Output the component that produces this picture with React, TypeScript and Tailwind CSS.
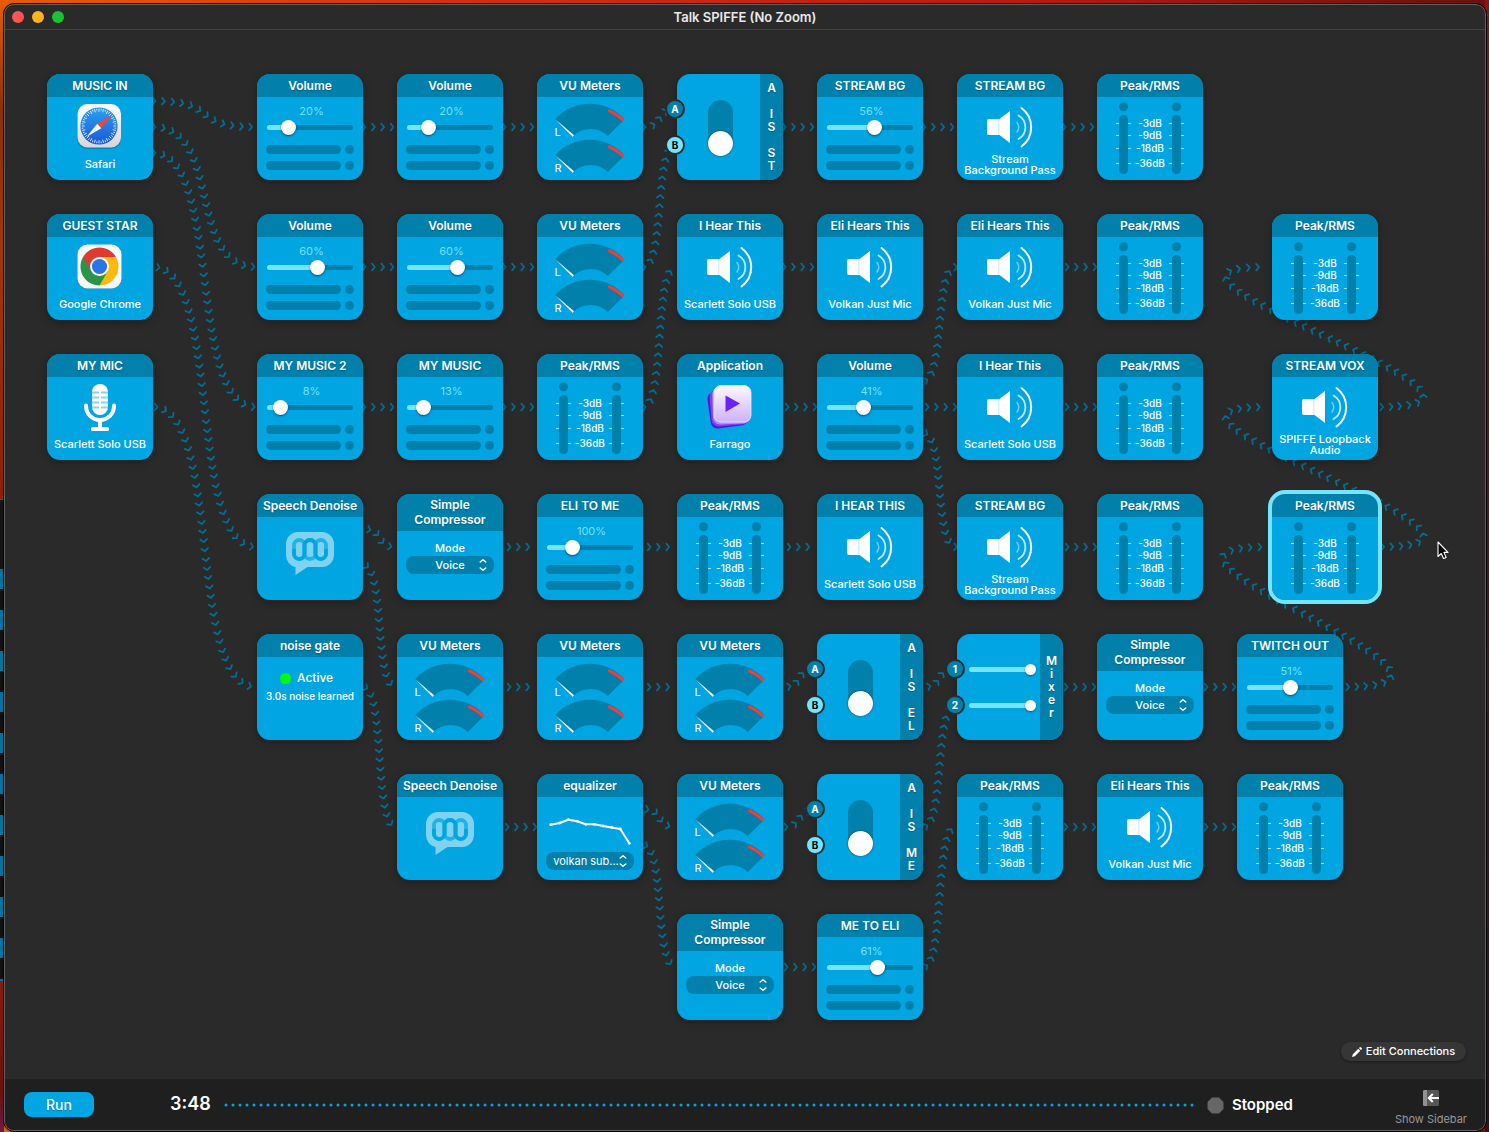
import React from "react";

/* ---------- geometry of the board ---------- */

const NODE = 106;
const HALF = 53;
const CHEVRON_STEP = 9.3;

/* left and top edges of the grid slots, measured on the canvas */
const COLS = [42, 252, 392, 532, 672, 812, 952, 1092, 1232, 1267];
const ROWS = [44, 184, 324, 464, 604, 744, 884];

type NodeSpec = {
  col: number;
  row: number;
  kind: "source" | "volume" | "vu" | "switch" | "output" | "peak" | "denoise" | "compressor" | "gate" | "equalizer" | "mixer";
  title: string;
  caption?: string;
  icon?: "safari" | "chrome" | "mic" | "farrago";
  percent?: number;
  position?: number;
  selected?: boolean;
};

const NODES: NodeSpec[] = [
  { col: 0, row: 0, kind: "source", title: "MUSIC IN", caption: "Safari", icon: "safari" },
  { col: 1, row: 0, kind: "volume", title: "Volume", percent: 20 },
  { col: 2, row: 0, kind: "volume", title: "Volume", percent: 20 },
  { col: 3, row: 0, kind: "vu", title: "VU Meters" },
  { col: 4, row: 0, kind: "switch", title: "A IS ST" },
  { col: 5, row: 0, kind: "volume", title: "STREAM BG", percent: 56 },
  { col: 6, row: 0, kind: "output", title: "STREAM BG", caption: "Stream Background Pass" },
  { col: 7, row: 0, kind: "peak", title: "Peak/RMS" },

  { col: 0, row: 1, kind: "source", title: "GUEST STAR", caption: "Google Chrome", icon: "chrome" },
  { col: 1, row: 1, kind: "volume", title: "Volume", percent: 60 },
  { col: 2, row: 1, kind: "volume", title: "Volume", percent: 60 },
  { col: 3, row: 1, kind: "vu", title: "VU Meters" },
  { col: 4, row: 1, kind: "output", title: "I Hear This", caption: "Scarlett Solo USB" },
  { col: 5, row: 1, kind: "output", title: "Eli Hears This", caption: "Volkan Just Mic" },
  { col: 6, row: 1, kind: "output", title: "Eli Hears This", caption: "Volkan Just Mic" },
  { col: 7, row: 1, kind: "peak", title: "Peak/RMS" },
  { col: 9, row: 1, kind: "peak", title: "Peak/RMS" },

  { col: 0, row: 2, kind: "source", title: "MY MIC", caption: "Scarlett Solo USB", icon: "mic" },
  { col: 1, row: 2, kind: "volume", title: "MY MUSIC 2", percent: 8 },
  { col: 2, row: 2, kind: "volume", title: "MY MUSIC", percent: 13 },
  { col: 3, row: 2, kind: "peak", title: "Peak/RMS" },
  { col: 4, row: 2, kind: "source", title: "Application", caption: "Farrago", icon: "farrago" },
  { col: 5, row: 2, kind: "volume", title: "Volume", percent: 41 },
  { col: 6, row: 2, kind: "output", title: "I Hear This", caption: "Scarlett Solo USB" },
  { col: 7, row: 2, kind: "peak", title: "Peak/RMS" },
  { col: 9, row: 2, kind: "output", title: "STREAM VOX", caption: "SPIFFE Loopback Audio" },

  { col: 1, row: 3, kind: "denoise", title: "Speech Denoise" },
  { col: 2, row: 3, kind: "compressor", title: "Simple Compressor" },
  { col: 3, row: 3, kind: "volume", title: "ELI TO ME", percent: 100, position: 25 },
  { col: 4, row: 3, kind: "peak", title: "Peak/RMS" },
  { col: 5, row: 3, kind: "output", title: "I HEAR THIS", caption: "Scarlett Solo USB" },
  { col: 6, row: 3, kind: "output", title: "STREAM BG", caption: "Stream Background Pass" },
  { col: 7, row: 3, kind: "peak", title: "Peak/RMS" },
  { col: 9, row: 3, kind: "peak", title: "Peak/RMS", selected: true },

  { col: 1, row: 4, kind: "gate", title: "noise gate" },
  { col: 2, row: 4, kind: "vu", title: "VU Meters" },
  { col: 3, row: 4, kind: "vu", title: "VU Meters" },
  { col: 4, row: 4, kind: "vu", title: "VU Meters" },
  { col: 5, row: 4, kind: "switch", title: "A IS EL" },
  { col: 6, row: 4, kind: "mixer", title: "Mixer" },
  { col: 7, row: 4, kind: "compressor", title: "Simple Compressor" },
  { col: 8, row: 4, kind: "volume", title: "TWITCH OUT", percent: 51 },

  { col: 2, row: 5, kind: "denoise", title: "Speech Denoise" },
  { col: 3, row: 5, kind: "equalizer", title: "equalizer" },
  { col: 4, row: 5, kind: "vu", title: "VU Meters" },
  { col: 5, row: 5, kind: "switch", title: "A IS ME" },
  { col: 6, row: 5, kind: "peak", title: "Peak/RMS" },
  { col: 7, row: 5, kind: "output", title: "Eli Hears This", caption: "Volkan Just Mic" },
  { col: 8, row: 5, kind: "peak", title: "Peak/RMS" },

  { col: 4, row: 6, kind: "compressor", title: "Simple Compressor" },
  { col: 5, row: 6, kind: "volume", title: "ME TO ELI", percent: 61 },
];

/* from [col, row, port offset] to [col, row, port offset], with the phase of the first chevron */
type Port = [number, number, number];
const WIRES: [Port, Port, number][] = [
  [[0, 0, -26], [1, 0, 0], 1],
  [[0, 0, 0], [1, 1, 0], 1],
  [[0, 0, 26], [1, 2, 0], 1],
  [[1, 0, 0], [2, 0, 0], 1],
  [[2, 0, 0], [3, 0, 0], 1],
  [[3, 0, 0], [4, 0, -18], 1],
  [[4, 0, 0], [5, 0, 0], 1],
  [[5, 0, 0], [6, 0, 0], 1],
  [[6, 0, 0], [7, 0, 0], 1],
  [[0, 1, 0], [1, 3, 0], 5],
  [[1, 1, 0], [2, 1, 0], 1],
  [[2, 1, 0], [3, 1, 0], 1],
  [[3, 1, 0], [4, 0, 18], 1],
  [[4, 1, 0], [5, 1, 0], 1],
  [[6, 1, 0], [7, 1, 0], 4],
  [[0, 2, 0], [1, 4, 0], 3],
  [[1, 2, 0], [2, 2, 0], 1],
  [[2, 2, 0], [3, 2, 0], 1],
  [[3, 2, 0], [4, 1, 0], 1],
  [[4, 2, 0], [5, 2, 0], 4],
  [[5, 2, -26], [6, 1, 0], 3],
  [[5, 2, 0], [6, 2, 0], 4],
  [[5, 2, 26], [6, 3, 0], 3],
  [[6, 2, 0], [7, 2, 0], 4],
  [[9, 2, 0], [9, 1, 0], 3],
  [[1, 3, -18], [2, 3, 0], 6],
  [[1, 3, 18], [2, 4, 0], 4],
  [[2, 3, 0], [3, 3, 0], 6],
  [[3, 3, 0], [4, 3, 0], 6],
  [[4, 3, 0], [5, 3, 0], 6],
  [[6, 3, 0], [7, 3, 0], 4],
  [[9, 3, 0], [9, 2, 0], 4],
  [[1, 4, 0], [2, 5, 0], 3],
  [[2, 4, 0], [3, 4, 0], 6],
  [[3, 4, 0], [4, 4, 0], 6],
  [[4, 4, 0], [5, 4, -18], 6],
  [[5, 4, 0], [6, 4, -18], 6],
  [[6, 4, 0], [7, 4, 0], 3],
  [[7, 4, 0], [8, 4, 0], 3],
  [[8, 4, 0], [9, 3, 0], 4],
  [[2, 5, 0], [3, 5, 0], 4],
  [[3, 5, -18], [4, 5, 0], 4],
  [[3, 5, 18], [4, 6, 0], 3],
  [[4, 5, 0], [5, 5, -17], 3],
  [[5, 5, 0], [6, 4, 18], 3],
  [[6, 5, 0], [7, 5, 0], 3],
  [[7, 5, 0], [8, 5, 0], 3],
  [[4, 6, 0], [5, 6, 0], 3],
  [[5, 6, 0], [6, 5, 0], 3],
];

type Mark = { x: number; y: number; angle: number };

function chevronsAlong([a, b, phase]: [Port, Port, number]): Mark[] {
  const backward = COLS[b[0]] < COLS[a[0]] + NODE;
  const x0 = COLS[a[0]] + NODE;
  const y0 = ROWS[a[1]] + HALF + a[2];
  const x3 = COLS[b[0]] - (backward ? 7 : 1);
  const y3 = ROWS[b[1]] + HALF + b[2];
  const x1 = x0 + (backward ? 190 : (x3 - x0) * 0.68);
  const x2 = x3 - (backward ? 176 : (x3 - x0) * 0.68);
  const marks: Mark[] = [];
  let walked = 0;
  let next = phase;
  let px = x0;
  let py = y0;
  const steps = 600;
  for (let i = 1; i <= steps; i++) {
    const t = i / steps;
    const u = 1 - t;
    const x = u * u * u * x0 + 3 * u * u * t * x1 + 3 * u * t * t * x2 + t * t * t * x3;
    const y = u * u * u * y0 + 3 * u * u * t * y0 + 3 * u * t * t * y3 + t * t * t * y3;
    walked += Math.hypot(x - px, y - py);
    if (walked >= next) {
      marks.push({ x, y, angle: (Math.atan2(y - py, x - px) * 180) / Math.PI });
      next += CHEVRON_STEP;
    }
    px = x;
    py = y;
  }
  return marks;
}

function Wires() {
  return (
    <svg className="pointer-events-none absolute inset-0 h-full w-full" aria-hidden="true">
      {WIRES.map((wire, w) => (
        <g key={w} fill="none" stroke="#046d90" strokeWidth="1.8" strokeLinecap="round" strokeLinejoin="round">
          {chevronsAlong(wire).map((m, i) => (
            <path key={i} d="M-1.300-3.300 1.500 0-1.300 3.300" transform={`translate(${m.x} ${m.y}) rotate(${m.angle})`} />
          ))}
        </g>
      ))}
    </svg>
  );
}

/* ---------- artwork ---------- */

function Art({ children }: { children: React.ReactNode }) {
  return (
    <svg viewBox="0 23 106 57" className="h-[57px] w-full shrink-0" aria-hidden="true">
      {children}
    </svg>
  );
}

function SpeakerArt() {
  return (
    <Art>
      <path d="M32 45h9.500v16H32a2 2 0 0 1-2-2V47a2 2 0 0 1 2-2z" fill="#fff" />
      <path d="M41 45h2v16h-2z" fill="#d3f0fb" />
      <path d="M42.500 45 53 37v32L42.500 61z" fill="#fff" />
      <g fill="none" strokeLinecap="round" stroke="#fff">
        <path d="M64.500 34a24 24 0 0 1 0 38.500" strokeWidth="2" />
        <path d="M61.500 41.500a13.500 13.500 0 0 1 0 23.500" strokeWidth="1.800" opacity=".75" />
        <path d="M60 48.500a7.500 7.500 0 0 1 0 9.500" strokeWidth="1.600" opacity=".45" />
      </g>
    </Art>
  );
}

const SAFARI_TICKS = Array.from({ length: 48 }, (_, i) => i * 7.5);

function SafariArt() {
  return (
    <Art>
      <defs>
        <linearGradient id="safari-tile" x1="0" y1="0" x2="0" y2="1">
          <stop offset="0" stopColor="#fff" />
          <stop offset="1" stopColor="#d6d6d8" />
        </linearGradient>
        <linearGradient id="safari-dial" x1="0" y1="0" x2="0" y2="1">
          <stop offset="0" stopColor="#2aa2f2" />
          <stop offset="1" stopColor="#1b56d8" />
        </linearGradient>
      </defs>
      <rect x="30" y="31" width="44" height="44" rx="10" fill="#000" opacity=".18" />
      <rect x="30.500" y="30" width="43.500" height="43.500" rx="10" fill="url(#safari-tile)" />
      <circle cx="52" cy="52" r="18.600" fill="url(#safari-dial)" />
      {SAFARI_TICKS.map((deg, i) => (
        <path key={deg} d={i % 2 ? "M52 34.600v1.800" : "M52 34.600v3.200"} stroke="#d8ecff" strokeWidth=".9" transform={`rotate(${deg} 52 52)`} />
      ))}
      <path d="M65.500 40.500 50.200 49.800 54.300 54.200z" fill="#f0453c" />
      <path d="M39.500 63 50.200 49.800 54.300 54.200z" fill="#f4f6f8" />
    </Art>
  );
}

function ChromeArt() {
  return (
    <Art>
      <rect x="30.500" y="31" width="44" height="44" rx="10" fill="#000" opacity=".18" />
      <rect x="30.500" y="30.500" width="44" height="44" rx="10" fill="#f5f9fb" />
      <path d="M52.500 52.500 36.050 43A19 19 0 0 1 68.950 43z" fill="#df3a30" />
      <path d="M52.500 52.500V43h16.450A19 19 0 0 1 52.500 71.500z" fill="#fdb90c" />
      <path d="M52.500 52.500 60.730 57.250 52.500 71.500A19 19 0 0 1 36.050 43z" fill="#2a9547" />
      <path d="M52.500 43H36.050L44.270 57.250A9.500 9.500 0 0 1 52.500 43z" fill="#df3a30" />
      <circle cx="52.500" cy="52.500" r="9.500" fill="#fff" />
      <circle cx="52.500" cy="52.500" r="7.600" fill="#2a74e8" />
    </Art>
  );
}

function MicArt() {
  return (
    <Art>
      <rect x="45" y="30" width="16" height="31" rx="8" fill="#fff" />
      {[37.5, 42.5, 47.5, 52.5].map((y) => (
        <path key={y} d={`M45 ${y}h7v2h-7zM54 ${y}h7v2h-7z`} fill="#86d4f1" />
      ))}
      <path d="M39 51.500v.5a14 14 0 0 0 28 0v-.5" fill="none" stroke="#fff" strokeWidth="4" strokeLinecap="round" />
      <path d="M51 66h4v8h-4z" fill="#fff" />
      <rect x="44" y="73" width="18" height="4" rx="1.500" fill="#fff" />
    </Art>
  );
}

function FarragoArt() {
  return (
    <Art>
      <defs>
        <linearGradient id="farrago-tile" x1="0" y1="0" x2="0" y2="1">
          <stop offset="0" stopColor="#fdf9ff" />
          <stop offset="1" stopColor="#ccb2f8" />
        </linearGradient>
      </defs>
      <rect x="32" y="36" width="38" height="37" rx="7" fill="#4a1bd8" transform="rotate(-8 51 55)" />
      <rect x="33.500" y="34.500" width="38" height="37" rx="7" fill="#8240f4" transform="rotate(-5 52 53)" />
      <rect x="35.500" y="33" width="37.500" height="37" rx="7" fill="#b58cf8" transform="rotate(-2 54 51)" />
      <rect x="37" y="31.500" width="37" height="36.500" rx="7" fill="url(#farrago-tile)" stroke="#f3e9ff" strokeWidth=".8" />
      <path d="M48.500 41.500 63 49.500 48.500 58z" fill="#6a22f2" />
    </Art>
  );
}

function VuDial({ letter }: { letter: string }) {
  return (
    <svg viewBox="0 0 106 36" className="h-9 w-full shrink-0 overflow-visible" role="img" aria-label={`Meter ${letter}`}>
      <path d="M18 18.500A46 46 0 0 1 87.500 18.500L70.700 35A24.500 24.500 0 0 0 36.300 35z" fill="#0080ab" />
      <path d="M72.500 9.800A46 46 0 0 1 85.500 18.500" fill="none" stroke="#fb3a30" strokeWidth="3" strokeLinecap="round" />
      <path d="M18 18 37 34.300 35.600 35.700z" fill="#fff" />
      <text x="17.500" y="35" fill="#fff" className="font-[Inter] text-[11px]">
        {letter}
      </text>
    </svg>
  );
}

function DenoiseArt() {
  return (
    <svg viewBox="0 23 106 60" className="h-[60px] w-full" aria-hidden="true">
      <path d="M41 38h24a12 12 0 0 1 12 12v11a12 12 0 0 1-12 12H50.500L38.500 81V73A12 12 0 0 1 29 61V50a12 12 0 0 1 12-12z" fill="#80d3f0" />
      <g fill="none" stroke="#1fb4e8" strokeWidth="3.800">
        <rect x="37" y="46" width="10.500" height="19" rx="5.200" />
        <rect x="47.500" y="46" width="11" height="19" rx="5.400" />
        <rect x="58.500" y="46" width="10.500" height="19" rx="5.200" />
      </g>
      <path d="M37 55v4.800a5.250 5.250 0 0 0 10.500 0V51.500a5.500 5.500 0 0 1 11 0v8.300a5.250 5.250 0 0 0 10.500 0V55" fill="none" stroke="#00a5e1" strokeWidth="3.800" />
    </svg>
  );
}

/* ---------- node bodies ---------- */

function Header({ title, tall = false }: { title: string; tall?: boolean }) {
  return (
    <h2
      className={
        tall
          ? "flex h-[37px] shrink-0 items-center justify-center bg-[#0080ab] px-2 pb-px text-center text-[12px] leading-[15px] font-semibold [text-shadow:0_1px_1px_rgba(0,0,0,0.25)]"
          : "flex h-[23px] shrink-0 items-center justify-center bg-[#0080ab] text-[12px] font-semibold whitespace-nowrap [text-shadow:0_1px_1px_rgba(0,0,0,0.25)]"
      }
    >
      {title}
    </h2>
  );
}

function Captioned({ art, caption }: { art: React.ReactNode; caption?: string }) {
  return (
    <>
      {art}
      <p className="flex h-[21px] items-center justify-center px-1 text-center text-[11px] leading-[11px] font-medium">{caption}</p>
    </>
  );
}

function Stepper() {
  return (
    <svg viewBox="0 0 8 14" className="pointer-events-none absolute top-[2px] right-[7px] h-[14px] w-2" fill="none" stroke="#fff" strokeWidth="1.400" strokeLinecap="round" strokeLinejoin="round" aria-hidden="true">
      <path d="M1.200 4 4 1.700 6.800 4M1.200 10 4 12.300 6.800 10" />
    </svg>
  );
}

function VolumeBody({ node }: { node: NodeSpec }) {
  const value = node.position ?? node.percent ?? 0;
  const fill = { "--fill": `${value}%` } as React.CSSProperties;
  return (
    <div className="flex flex-1 flex-col px-[9px] pt-[7px]">
      <output className="pl-[3px] text-center text-[11px] leading-[14px] text-[#73e0fc]">{node.percent}%</output>
      <input
        type="range"
        aria-label={`${node.title} level`}
        defaultValue={value}
        style={fill}
        className="mx-px h-[19px] appearance-none bg-transparent [&::-webkit-slider-runnable-track]:h-[5px] [&::-webkit-slider-runnable-track]:rounded-full [&::-webkit-slider-runnable-track]:bg-[linear-gradient(to_right,#73e5ff_var(--fill),#0080ab_var(--fill))] [&::-webkit-slider-thumb]:-mt-[5px] [&::-webkit-slider-thumb]:size-[15px] [&::-webkit-slider-thumb]:appearance-none [&::-webkit-slider-thumb]:rounded-full [&::-webkit-slider-thumb]:bg-white [&::-webkit-slider-thumb]:shadow-[0_1px_2px_rgba(0,0,0,0.5)]"
      />
      <div className="mt-2 flex flex-col gap-[7px]">
        <div className="flex gap-1">
          <span className="h-[9px] flex-1 rounded-full bg-[#0080ab]" />
          <span className="size-[9px] rounded-full bg-[#0080ab]" />
        </div>
        <div className="flex gap-1">
          <span className="h-[9px] flex-1 rounded-full bg-[#0080ab]" />
          <span className="size-[9px] rounded-full bg-[#0080ab]" />
        </div>
      </div>
    </div>
  );
}

function PeakColumn() {
  return (
    <svg viewBox="0 0 15 73" className="h-[73px] w-[15px]" aria-hidden="true">
      <path d="M0 21.500h15M0 33.500h15M0 46.500h15M0 61.500h15" stroke="#8fe3fb" strokeWidth="1" />
      <circle cx="7.500" cy="4.800" r="4.500" fill="#0080ab" />
      <rect x="3" y="13" width="9" height="59" rx="4.500" fill="#0080ab" />
    </svg>
  );
}

function PeakBody() {
  return (
    <div className="flex flex-1 justify-center pt-[5px]">
      <PeakColumn />
      <div className="flex w-[38px] flex-col items-center pt-[15px] text-[10px] font-medium whitespace-nowrap">
        <span className="leading-[12px]">-3dB</span>
        <span className="leading-[12px]">-9dB</span>
        <span className="leading-[14px]">-18dB</span>
        <span className="leading-[16px]">-36dB</span>
      </div>
      <PeakColumn />
    </div>
  );
}

function CompressorBody({ id }: { id: string }) {
  return (
    <div className="flex flex-col px-[9px] pt-[10px]">
      <label htmlFor={id} className="text-center text-[11px] leading-[15px] font-medium">
        Mode
      </label>
      <div className="relative">
        <select id={id} className="block h-[18px] w-full appearance-none rounded-lg bg-[#0080ab] text-center text-[11px] font-medium [text-align-last:center]">
          <option>Voice</option>
        </select>
        <Stepper />
      </div>
    </div>
  );
}

function EqualizerBody() {
  return (
    <div className="flex flex-col px-[9px]">
      <svg viewBox="9 23 88 55" className="h-[55px] w-full" aria-hidden="true">
        <path d="M13.700 50.700 22.700 49 31.300 45.700 40.300 47.300 48.700 50.300 57.300 50.300 66 52 83.300 55 92.300 69.300" fill="none" stroke="#fff" strokeWidth="2" strokeLinejoin="round" strokeLinecap="round" />
        {[[13.7, 50.7], [22.7, 49], [31.3, 45.7], [40.3, 47.3], [48.7, 50.3], [57.3, 50.3], [66, 52], [74.7, 53.5], [83.3, 55], [92.3, 69.3]].map(([x, y]) => (
          <circle key={x} cx={x} cy={y} r="1.400" fill="#fff" />
        ))}
      </svg>
      <div className="relative">
        <select aria-label="Equalizer preset" className="block h-[18px] w-full appearance-none rounded-lg bg-[#0080ab] pr-2 text-center text-[11px] [text-align-last:center]">
          <option>volkan sub...</option>
        </select>
        <Stepper />
      </div>
    </div>
  );
}

function GateBody() {
  return (
    <div className="flex flex-col pt-3">
      <p className="flex items-center gap-[6px] pl-[23px] text-[12px] leading-[18px] font-medium">
        <span className="size-[11px] rounded-full bg-[#00fa12]" />
        Active
      </p>
      <p className="text-center text-[10px] leading-[18px] font-medium whitespace-nowrap">3.0s noise learned</p>
    </div>
  );
}

function SideTitle({ title }: { title: string }) {
  return (
    <h2 aria-label={title} className="flex w-[23px] flex-col items-center justify-center rounded-r-[13px] bg-[#0080ab] pb-px text-[12px] font-semibold [text-shadow:0_1px_1px_rgba(0,0,0,0.25)]">
      {title.split("").map((ch, i) => (
        <span key={i} className="h-[13px] leading-[13px]">
          {ch}
        </span>
      ))}
    </h2>
  );
}

function PortBadge({ label, place, active = false }: { label: string; place: "upper" | "lower"; active?: boolean }) {
  return (
    <span
      className={`absolute -left-[12px] flex size-5 items-center justify-center rounded-full border-2 border-[#2a2a2a] text-[10px] font-bold ${
        place === "upper" ? "top-[25px]" : "top-[61px]"
      } ${active ? "bg-[#73e5ff] text-black" : "bg-[#0080ab] text-white"}`}
    >
      {label}
    </span>
  );
}

function SwitchNode({ title }: { title: string }) {
  return (
    <>
      <div className="flex flex-1 items-center justify-center pl-1">
        <button type="button" role="switch" aria-checked="true" aria-label={title} className="mt-0.5 flex h-14 w-[25px] items-end rounded-full bg-[#0080ab]">
          <span className="size-[25px] rounded-full bg-white shadow-[0_0_2px_rgba(0,0,0,0.6)]" />
        </button>
      </div>
      <SideTitle title={title} />
      <PortBadge label="A" place="upper" />
      <PortBadge label="B" place="lower" active />
    </>
  );
}

function MixerNode({ title }: { title: string }) {
  return (
    <>
      <div className="flex flex-1 flex-col justify-center gap-[25px] pl-3">
        {[1, 2].map((n) => (
          <input
            key={n}
            type="range"
            aria-label={`Input ${n} level`}
            defaultValue={100}
            className="h-[11px] w-[67px] appearance-none bg-transparent [&::-webkit-slider-runnable-track]:h-[5px] [&::-webkit-slider-runnable-track]:rounded-full [&::-webkit-slider-runnable-track]:bg-[#73e5ff] [&::-webkit-slider-thumb]:-mt-[3px] [&::-webkit-slider-thumb]:size-[11px] [&::-webkit-slider-thumb]:appearance-none [&::-webkit-slider-thumb]:rounded-full [&::-webkit-slider-thumb]:bg-white [&::-webkit-slider-thumb]:shadow-[0_1px_2px_rgba(0,0,0,0.4)]"
          />
        ))}
      </div>
      <SideTitle title={title} />
      <PortBadge label="1" place="upper" />
      <PortBadge label="2" place="lower" />
    </>
  );
}

const SOURCE_ART = {
  safari: <SafariArt />,
  chrome: <ChromeArt />,
  mic: <MicArt />,
  farrago: <FarragoArt />,
};

function NodeBody({ node }: { node: NodeSpec }) {
  switch (node.kind) {
    case "source":
      return <Captioned art={SOURCE_ART[node.icon ?? "safari"]} caption={node.caption} />;
    case "output":
      return <Captioned art={<SpeakerArt />} caption={node.caption} />;
    case "volume":
      return <VolumeBody node={node} />;
    case "vu":
      return (
        <div className="flex flex-col pt-1">
          <VuDial letter="L" />
          <VuDial letter="R" />
        </div>
      );
    case "peak":
      return <PeakBody />;
    case "denoise":
      return <DenoiseArt />;
    case "compressor":
      return <CompressorBody id={`mode-${node.col}-${node.row}`} />;
    case "equalizer":
      return <EqualizerBody />;
    default:
      return <GateBody />;
  }
}

function BoardNode({ node }: { node: NodeSpec }) {
  const place = { left: COLS[node.col], top: ROWS[node.row] };
  if (node.kind === "switch" || node.kind === "mixer") {
    return (
      <article style={place} className="absolute flex size-[106px] rounded-[13px] bg-[#00a5e1] text-white shadow-[0_2px_8px_rgba(0,0,0,0.3)]">
        {node.kind === "switch" ? <SwitchNode title={node.title} /> : <MixerNode title={node.title} />}
      </article>
    );
  }
  return (
    <article
      style={place}
      className={`absolute flex size-[106px] flex-col overflow-hidden rounded-[13px] bg-[#00a5e1] text-white ${
        node.selected ? "outline-4 outline-[#73e5ff]" : "shadow-[0_2px_8px_rgba(0,0,0,0.3)]"
      }`}
    >
      <Header title={node.title} tall={node.kind === "compressor"} />
      <NodeBody node={node} />
    </article>
  );
}

/* ---------- window ---------- */

function Pointer() {
  return (
    <svg viewBox="0 0 12 19" className="pointer-events-none absolute top-[511px] left-[1432px] h-[19px] w-3" aria-hidden="true">
      <path d="M1 1v14.500l3.300-3 2.200 5 2.600-1.100-2.200-5H11z" fill="#000" stroke="#fff" strokeWidth="1.100" strokeLinejoin="round" />
    </svg>
  );
}

function TitleBar() {
  return (
    <header className="grid h-[25px] shrink-0 grid-cols-[1fr_auto_1fr] items-center border-b border-[#424242] px-[7px]">
      <div className="flex gap-2">
        <button type="button" aria-label="Close" className="size-3 rounded-full bg-[#ff5450]" />
        <button type="button" aria-label="Minimize" className="size-3 rounded-full bg-[#ffb221]" />
        <button type="button" aria-label="Zoom" className="size-3 rounded-full bg-[#18c42f]" />
      </div>
      <h1 className="text-[13px] leading-5 font-semibold text-[#e8e8e8]">Talk SPIFFE (No Zoom)</h1>
    </header>
  );
}

function Footer() {
  return (
    <footer className="flex h-[51px] shrink-0 items-center bg-[#1f1f1f] pr-[18px] pl-[19px]">
      <button type="button" className="h-[25px] w-[70px] rounded-lg bg-[#00a5e1] text-[14px] font-medium text-white [text-shadow:0_1px_1px_rgba(0,0,0,0.25)]">
        Run
      </button>
      <time className="ml-[76px] w-[54px] pb-px text-[18px] leading-6 font-semibold text-white">3:48</time>
      <svg className="h-1 min-w-0 flex-1" aria-hidden="true">
        <line x1="2" y1="2" x2="100%" y2="2" stroke="#00a5e1" strokeWidth="3" strokeLinecap="round" strokeDasharray="0 7" />
      </svg>
      <p className="ml-3 flex w-[188px] items-center gap-2 pt-px text-[15px] font-semibold text-white">
        <svg viewBox="0 0 17 17" className="size-[17px]" aria-hidden="true">
          <path d="M5 .5h7L16.500 5v7L12 16.500H5L.5 12V5z" fill="#666" />
        </svg>
        Stopped
      </p>
      <button type="button" className="flex flex-col items-center gap-[6px] pt-[7px] text-[11px] leading-[15px] whitespace-nowrap text-[#989898]">
        <svg viewBox="0 0 16 16" className="size-4" aria-hidden="true">
          <rect width="16" height="16" rx="1.500" fill="#565656" />
          <path d="M1.500 0H4v16H1.500A1.500 1.500 0 0 1 0 14.500v-13A1.500 1.500 0 0 1 1.500 0z" fill="#929292" />
          <path d="M16 8H6.500M9.800 4 5.800 8l4 4" fill="none" stroke="#fff" strokeWidth="2" />
        </svg>
        Show Sidebar
      </button>
    </footer>
  );
}

function Desktop() {
  return (
    <div aria-hidden="true" className="absolute inset-0 overflow-hidden bg-[linear-gradient(to_right,#e65c00,#d4320c_30%,#b81a0e_70%,#6a1010)]">
      <div className="absolute inset-y-0 right-0 w-1 bg-[linear-gradient(to_bottom,#8c1410,#641012_50%,#43090d)]" />
      <div className="absolute inset-y-0 left-0 flex w-1 flex-col">
        <div className="h-[499px] bg-[linear-gradient(to_bottom,#e65c00,#8f3200_22%,#a03a04_50%,#8f2000)]" />
        <div className="h-[70px] border-t border-[#555] bg-[#141414]" />
        <div className="h-[412px] bg-[repeating-linear-gradient(to_bottom,#0074a0_0,#0074a0_20px,#111_20px,#111_41px)]" />
        <div className="flex-1 bg-[linear-gradient(to_bottom,#8a1a10,#6d1010_75%,#70184a)]" />
      </div>
    </div>
  );
}

export default function App() {
  return (
    <div className="relative flex min-h-screen flex-col bg-[#3a0a0a] pt-1 pr-[3px] pb-px pl-1 font-[Inter,'Liberation_Sans',sans-serif]">
      <Desktop />
      <div className="relative flex flex-1 flex-col overflow-hidden rounded-[10px] border border-[#606060] bg-[#2a2a2a] outline outline-black">
        <TitleBar />
        <main className="relative min-h-[1010px] flex-1 overflow-hidden">
          <Wires />
          {NODES.map((node) => (
            <BoardNode key={`${node.col}-${node.row}`} node={node} />
          ))}
          <button type="button" className="absolute right-[19px] bottom-[18px] flex h-[19px] w-[125px] items-center justify-center gap-1 rounded-full bg-[#363636] text-[11px] font-medium whitespace-nowrap text-white shadow-[0_1px_3px_rgba(0,0,0,0.4)]">
            <svg viewBox="0 0 10 10" className="size-[10px]" fill="#fff" aria-hidden="true">
              <path d="M0 10 .8 7.200 6.300 1.700 8.300 3.700 2.800 9.200zM6.900 1.100 7.600.4a1 1 0 0 1 1.400 0l.6.600a1 1 0 0 1 0 1.400l-.7.700z" />
            </svg>
            Edit Connections
          </button>
          <Pointer />
        </main>
        <Footer />
      </div>
    </div>
  );
}
